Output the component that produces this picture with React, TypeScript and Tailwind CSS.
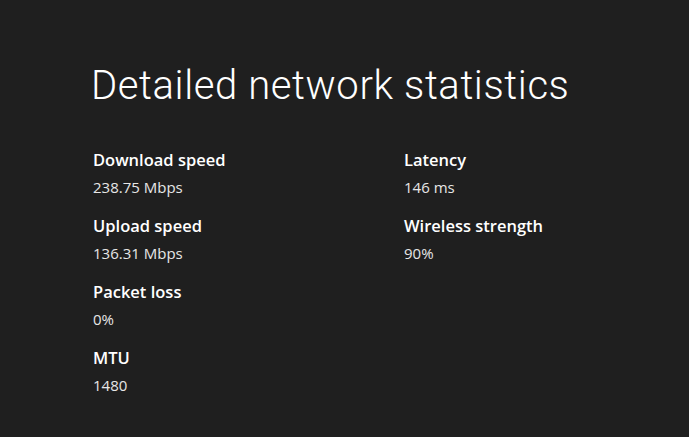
import React from "react";

const left = [
  ["Download speed", "238.75 Mbps"],
  ["Upload speed", "136.31 Mbps"],
  ["Packet loss", "0%"],
  ["MTU", "1480"],
];
const right = [
  ["Latency", "146 ms"],
  ["Wireless strength", "90%"],
];

function Item({ label, value }: { label: string; value: string }) {
  return (
    <div className="flex flex-col h-[66px]">
      <div className="text-[16.5px] leading-[20px] font-semibold text-white">{label}</div>
      <div className="mt-[7px] text-[15px] leading-[20px] text-[#e6e6e6]">{value}</div>
    </div>
  );
}

export default function App() {
  return (
    <div className="w-[689px] h-[437px] bg-[#1f1f1f] overflow-hidden font-['Open_Sans',sans-serif]">
      <div className="pl-[91px] pt-[62px]">
        <h1 className="text-[40px] leading-[48px] font-light text-white font-['Roboto',sans-serif] tracking-[0.6px]">
          Detailed network statistics
        </h1>
        <div className="mt-[40px] ml-[2px] flex">
          <div className="w-[311px] flex flex-col">
            {left.map(([l, v]) => (
              <Item key={l} label={l} value={v} />
            ))}
          </div>
          <div className="flex flex-col">
            {right.map(([l, v]) => (
              <Item key={l} label={l} value={v} />
            ))}
          </div>
        </div>
      </div>
    </div>
  );
}
